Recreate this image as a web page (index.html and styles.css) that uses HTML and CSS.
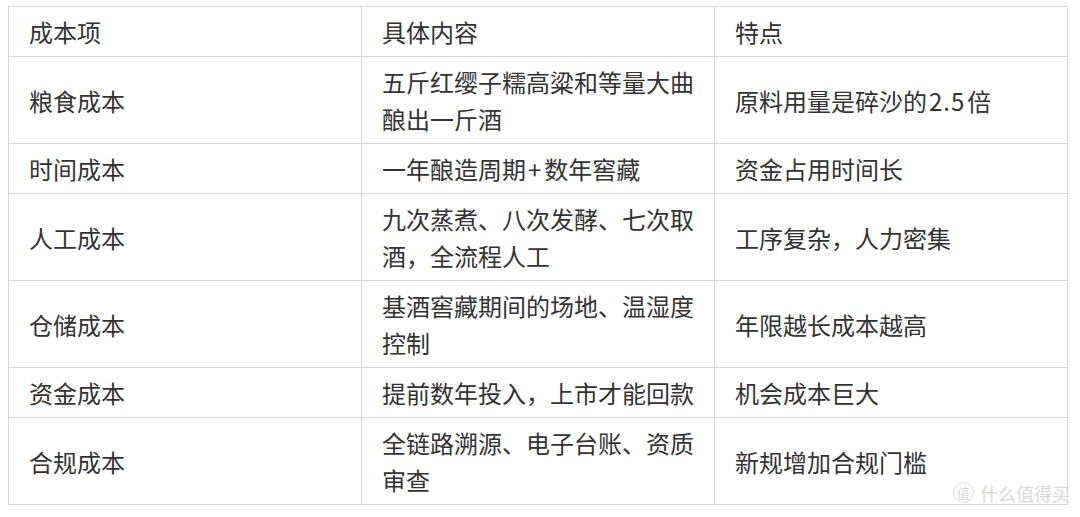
FILE: index.html
```html
<!DOCTYPE html>
<html lang="zh">
<head>
<meta charset="utf-8">
<link rel="stylesheet" href="styles.css">
</head>
<body>
<div class="wrap">
<table class="cost">
  <colgroup><col class="c1"><col class="c2"><col class="c3"></colgroup>
  <tr><td>成本项</td><td>具体内容</td><td>特点</td></tr>
  <tr><td>粮食成本</td><td>五斤红缨子糯高粱和等量大曲酿出一斤酒</td><td>原料用量是碎沙的<span class="lat">2.5</span>倍</td></tr>
  <tr><td>时间成本</td><td>一年酿造周期<span class="lat">+</span>数年窖藏</td><td>资金占用时间长</td></tr>
  <tr><td>人工成本</td><td>九次蒸煮、八次发酵、七次取酒，全流程人工</td><td>工序复杂，人力密集</td></tr>
  <tr><td>仓储成本</td><td>基酒窖藏期间的场地、温湿度控制</td><td>年限越长成本越高</td></tr>
  <tr><td>资金成本</td><td>提前数年投入，上市才能回款</td><td>机会成本巨大</td></tr>
  <tr><td>合规成本</td><td>全链路溯源、电子台账、资质审查</td><td>新规增加合规门槛</td></tr>
</table>
<div class="mark"><span class="badge">值</span><span class="brand">什么值得买</span></div>
</div>
</body>
</html>
```

FILE: styles.css
```css
html, body { margin: 0; padding: 0; background: #fff; }
body { padding: 6px 0 0 8px; font-family: "Noto Sans CJK SC", sans-serif; color: #333; }
.wrap { position: relative; width: 1058px; }
.cost { border-collapse: collapse; width: 1058px; table-layout: fixed; font-size: 24px; line-height: 37px; }
.c1, .c2, .c3 { width: 353px; }
.cost td { border: 1px solid #d6d6de; padding: 6px 20px 6px 20px; vertical-align: middle; word-break: break-all; }
.lat { padding: 0 2px; letter-spacing: 1px; }
.mark { position: absolute; right: -4px; bottom: 2px; display: flex; align-items: center; gap: 6px; color: #d8d8d8; text-shadow: 0 0 1px #fff, 0 0 2px #fff; }
.badge { width: 19px; height: 19px; border: 1.5px solid #dcdcdc; border-radius: 50%; font-size: 13px; line-height: 19px; text-align: center; background: rgba(255,255,255,0.6); }
.brand { font-size: 18px; line-height: 20px; letter-spacing: 0; }
```
